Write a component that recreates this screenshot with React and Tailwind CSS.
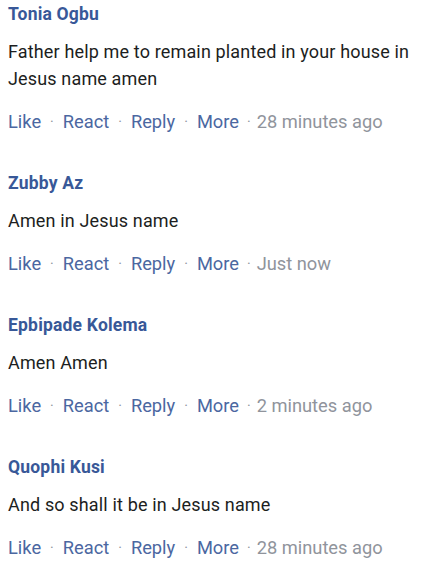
import React from 'react';

const comments = [
  { name: 'Tonia Ogbu', text: 'Father help me to remain planted in your house in Jesus name amen', time: '28 minutes ago' },
  { name: 'Zubby Az', text: 'Amen in Jesus name', time: 'Just now' },
  { name: 'Epbipade Kolema', text: 'Amen Amen', time: '2 minutes ago' },
  { name: 'Quophi Kusi', text: 'And so shall it be in Jesus name', time: '28 minutes ago' },
];

const Dot = () => <span className="mx-[9px] text-[#8d949e] text-[14px]">·</span>;

const Comment = ({ name, text, time }) => (
  <div className="mb-[37px]">
    <div className="text-[17.5px] leading-6 font-bold tracking-[0.2px] text-[#385898]">{name}</div>
    <p className="mt-[12px] text-[18px] leading-[27px] tracking-[0.15px] text-[#1c1e21]">{text}</p>
    <div className="mt-[18px] flex items-center text-[18.3px] leading-6 whitespace-nowrap">
      <span className="text-[#4b67a1]">Like</span>
      <Dot />
      <span className="text-[#4b67a1]">React</span>
      <Dot />
      <span className="text-[#4b67a1]">Reply</span>
      <Dot />
      <span className="text-[#4b67a1]">More</span>
      <span className="ml-[8px] mr-[6px] text-[#8d949e] text-[14px]">·</span>
      <span className="text-[#90949c]">{time}</span>
    </div>
  </div>
);

export default function App() {
  return (
    <div className="w-[427px] h-[581px] overflow-hidden bg-white px-2 pt-[2px]" style={{ fontFamily: 'Roboto, sans-serif' }}>
      {comments.map((c) => (
        <Comment key={c.name} {...c} />
      ))}
    </div>
  );
}
